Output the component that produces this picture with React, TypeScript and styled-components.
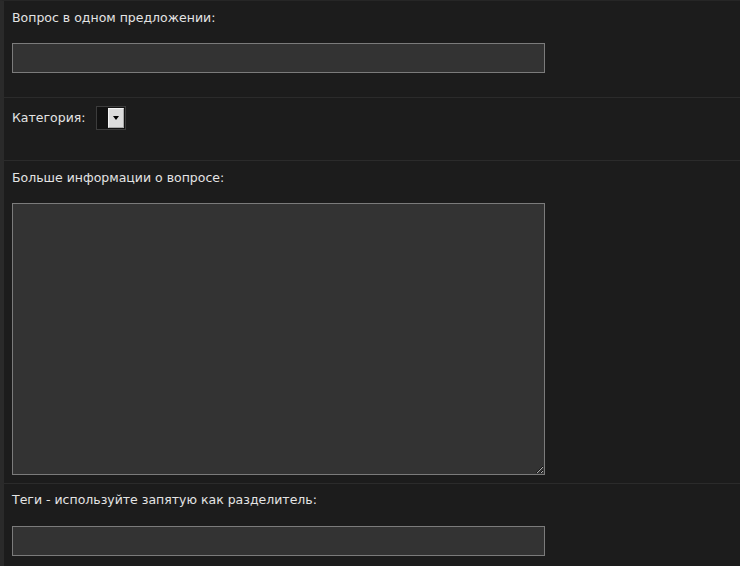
import React from 'react'
import styled, {createGlobalStyle} from 'styled-components'

const GlobalStyle = createGlobalStyle`
    html, body {
        margin: 0;
        padding: 0;
        background: #1c1c1c;
    }
    body {
        font-family: Tahoma, "DejaVu Sans", Verdana, sans-serif;
        font-size: 12.5px;
        color: #e6e6e6;
    }
`

const Page = styled.div`
    width: 740px;
    height: 566px;
    overflow: hidden;
    border-top: 1px solid #262626;
    border-left: 4px solid #2a2a2a;
    box-sizing: border-box;
    background: #1c1c1c;
`

const Section = styled.div<{pad: string}>`
    padding: ${({pad}) => pad};
    border-bottom: 1px solid #2b2b2b;
`

const InlineSection = styled(Section)`
    display: flex;
    align-items: flex-start;
    gap: 10px;
`

const Label = styled.label`
    display: block;
    line-height: 16px;
    color: #e4e4e4;
`

const InlineLabel = styled(Label)`
    padding-top: 4px;
`

const TextInput = styled.input<{gap?: number}>`
    display: block;
    box-sizing: border-box;
    width: 533px;
    height: 30px;
    margin-top: ${({gap}) => gap ?? 17}px;
    background: #333;
    border: 1px solid #7b7b7b;
    color: #eee;
    outline: none;
`

const TextArea = styled.textarea`
    display: block;
    box-sizing: border-box;
    width: 533px;
    height: 272px;
    margin-top: 17px;
    background: #333;
    border: 1px solid #7b7b7b;
    color: #eee;
    outline: none;
    resize: both;
`

const Select = styled.div`
    box-sizing: border-box;
    width: 30px;
    height: 24px;
    display: flex;
    justify-content: flex-end;
    align-items: center;
    padding-right: 1px;
    background: #121212;
    border: 1px solid #3c3c3c;
`

const SelectButton = styled.div`
    box-sizing: border-box;
    width: 16px;
    height: 20px;
    display: flex;
    align-items: center;
    justify-content: center;
    background: #dcdcdc;
    border: 1px solid #f4f4f4;
    border-right-color: #a9a9a9;
    border-bottom-color: #a9a9a9;
`

const Arrow = styled.span`
    width: 0;
    height: 0;
    border-left: 3px solid transparent;
    border-right: 3px solid transparent;
    border-top: 4px solid #000;
`

const App = () => {
    return (
        <Page>
            <GlobalStyle />
            <Section pad="9px 8px 24px 8px">
                <Label>Вопрос в одном предложении:</Label>
                <TextInput type="text" />
            </Section>
            <InlineSection pad="8px 8px 30px 8px">
                <InlineLabel>Категория:</InlineLabel>
                <Select>
                    <SelectButton>
                        <Arrow />
                    </SelectButton>
                </Select>
            </InlineSection>
            <Section pad="9px 8px 8px 8px">
                <Label>Больше информации о вопросе:</Label>
                <TextArea />
            </Section>
            <Section pad="8px 8px 10px 8px">
                <Label>Теги - используйте запятую как разделитель:</Label>
                <TextInput type="text" gap={18} />
            </Section>
        </Page>
    )
}

export default App
